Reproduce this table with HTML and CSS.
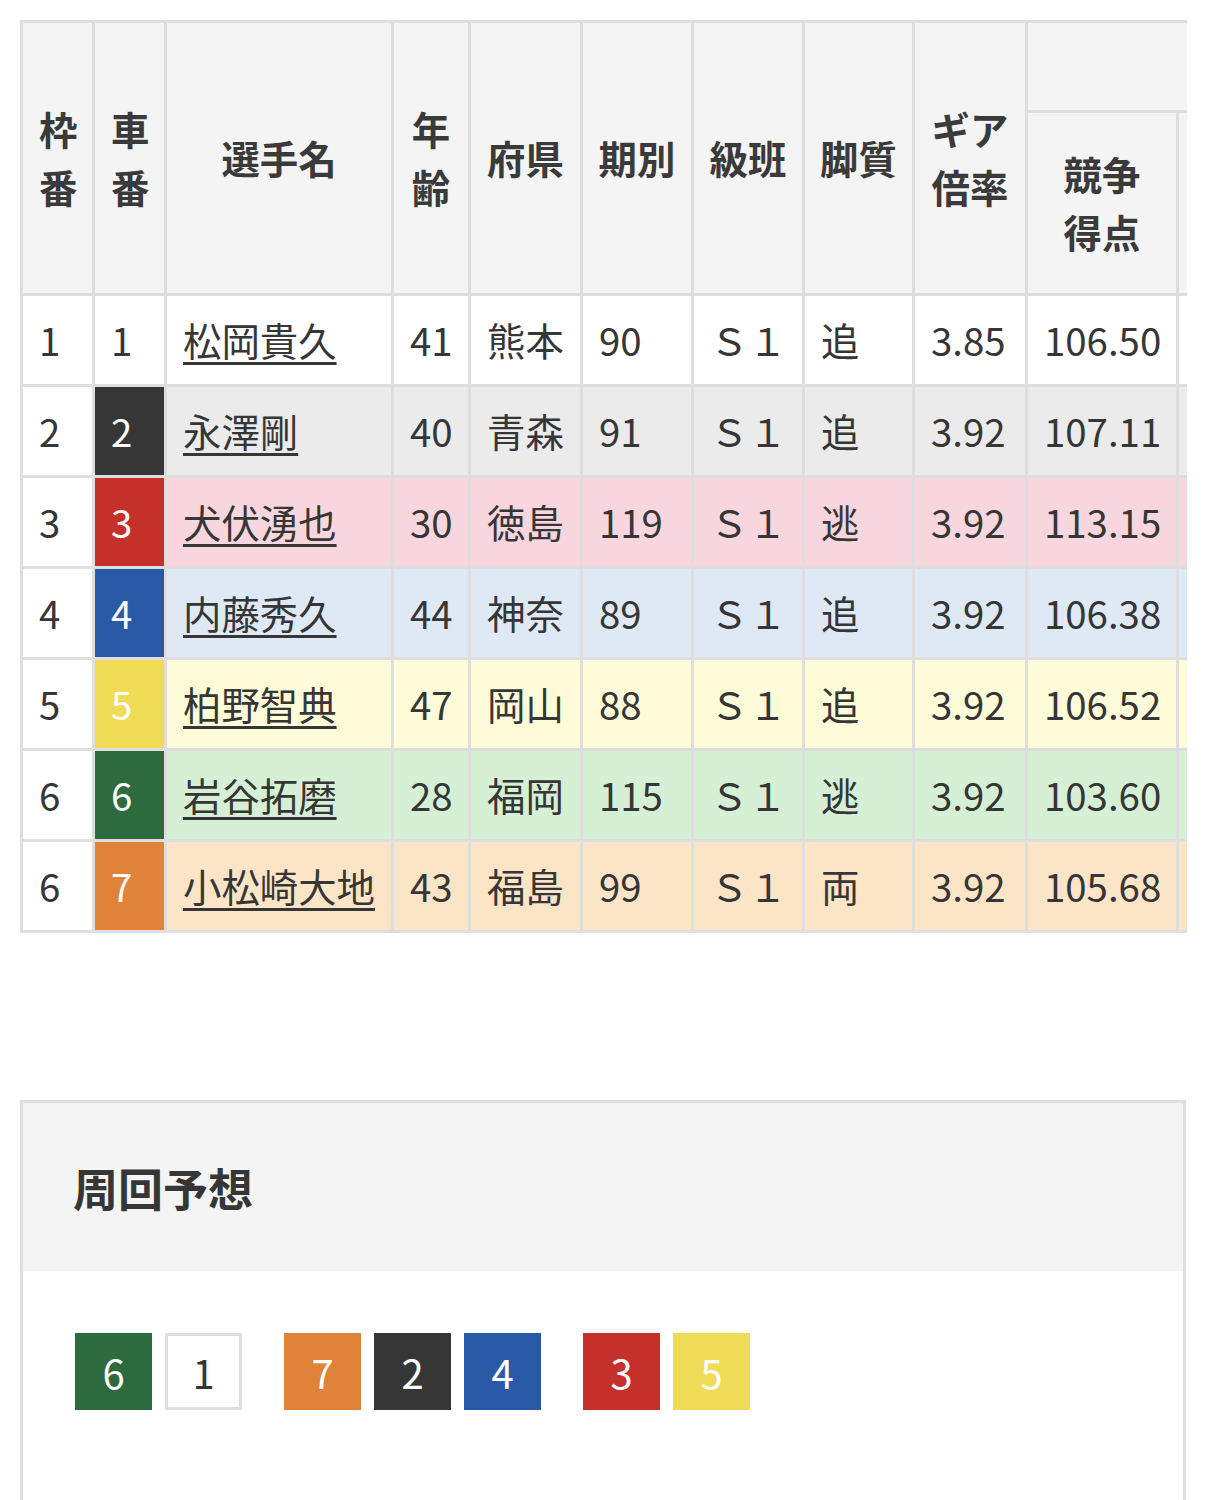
FILE: index.html
```html
<!DOCTYPE html>
<html lang="ja">
<head>
<meta charset="utf-8">
<title>出走表</title>
<link rel="stylesheet" href="styles.css">
</head>
<body>
<div class="scroll">
  <table class="entry">
    <colgroup>
      <col class="c-waku"><col class="c-sha"><col class="c-name"><col class="c-age"><col class="c-pref">
      <col class="c-ki"><col class="c-kyu"><col class="c-kyaku"><col class="c-gear"><col class="c-score">
      <col class="c-ex">
    </colgroup>
    <thead>
      <tr>
        <th rowspan="2" class="narrow">枠番</th>
        <th rowspan="2" class="narrow">車番</th>
        <th rowspan="2">選手名</th>
        <th rowspan="2" class="narrow">年齢</th>
        <th rowspan="2">府県</th>
        <th rowspan="2">期別</th>
        <th rowspan="2">級班</th>
        <th rowspan="2">脚質</th>
        <th rowspan="2">ギア<br>倍率</th>
        <th colspan="2" class="group"></th>
      </tr>
      <tr>
        <th class="sub">競争<br>得点</th>
        <th class="sub"></th>
      </tr>
    </thead>
    <tbody>
      <tr class="r1">
        <td class="waku">1</td><td class="sha s1">1</td><td><a href="#">松岡貴久</a></td><td>41</td><td>熊本</td><td>90</td><td>Ｓ１</td><td>追</td><td>3.85</td><td>106.50</td><td></td>
      </tr>
      <tr class="r2">
        <td class="waku">2</td><td class="sha s2">2</td><td><a href="#">永澤剛</a></td><td>40</td><td>青森</td><td>91</td><td>Ｓ１</td><td>追</td><td>3.92</td><td>107.11</td><td></td>
      </tr>
      <tr class="r3">
        <td class="waku">3</td><td class="sha s3">3</td><td><a href="#">犬伏湧也</a></td><td>30</td><td>徳島</td><td>119</td><td>Ｓ１</td><td>逃</td><td>3.92</td><td>113.15</td><td></td>
      </tr>
      <tr class="r4">
        <td class="waku">4</td><td class="sha s4">4</td><td><a href="#">内藤秀久</a></td><td>44</td><td>神奈</td><td>89</td><td>Ｓ１</td><td>追</td><td>3.92</td><td>106.38</td><td></td>
      </tr>
      <tr class="r5">
        <td class="waku">5</td><td class="sha s5">5</td><td><a href="#">柏野智典</a></td><td>47</td><td>岡山</td><td>88</td><td>Ｓ１</td><td>追</td><td>3.92</td><td>106.52</td><td></td>
      </tr>
      <tr class="r6">
        <td class="waku">6</td><td class="sha s6">6</td><td><a href="#">岩谷拓磨</a></td><td>28</td><td>福岡</td><td>115</td><td>Ｓ１</td><td>逃</td><td>3.92</td><td>103.60</td><td></td>
      </tr>
      <tr class="r7">
        <td class="waku">6</td><td class="sha s7">7</td><td><a href="#">小松崎大地</a></td><td>43</td><td>福島</td><td>99</td><td>Ｓ１</td><td>両</td><td>3.92</td><td>105.68</td><td></td>
      </tr>
    </tbody>
  </table>
</div>

<section class="lap">
  <h2 class="lap-title">周回予想</h2>
  <div class="lap-body">
    <div class="lines">
      <div class="line">
        <span class="car s6">6</span>
        <span class="car s1">1</span>
      </div>
      <div class="line">
        <span class="car s7">7</span>
        <span class="car s2">2</span>
        <span class="car s4">4</span>
      </div>
      <div class="line">
        <span class="car s3">3</span>
        <span class="car s5">5</span>
      </div>
    </div>
  </div>
</section>
</body>
</html>
```

FILE: styles.css
```css
html, body {
  margin: 0;
  padding: 0;
  background: #ffffff;
}

body {
  font-family: "Noto Sans CJK JP", "Noto Sans", sans-serif;
  color: #363636;
  padding-top: 20px;
}

.scroll {
  margin: 0 20px;
  width: 1167px;
  overflow: hidden;
}

.entry {
  table-layout: fixed;
  width: 1279px;
  border-collapse: separate;
  border-spacing: 0;
  border-top: 3px solid #dedede;
  border-left: 3px solid #dedede;
  font-size: 38.4px;
}

.c-waku { width: 72px; }
.c-sha { width: 72px; }
.c-name { width: 227px; }
.c-age { width: 77px; }
.c-pref { width: 112px; }
.c-ki { width: 111px; }
.c-kyu { width: 111px; }
.c-kyaku { width: 110px; }
.c-gear { width: 113px; }
.c-score { width: 151px; }
.c-ex { width: 120px; }

.entry th,
.entry td {
  box-sizing: border-box;
  border-right: 3px solid #dedede;
  border-bottom: 3px solid #dedede;
  overflow: hidden;
  white-space: nowrap;
}

.entry th {
  background: #f4f4f4;
  font-weight: 700;
  line-height: 1.5;
  text-align: center;
  vertical-align: middle;
  padding: 0 8px;
  color: #3a3a3a;
}

.entry th.narrow {
  white-space: normal;
  padding: 0 16px;
}

.entry th.group {
  height: 90px;
}

.entry th.sub {
  height: 183px;
}

.entry td {
  height: 91px;
  padding: 0 16px;
  vertical-align: middle;
  text-align: left;
  line-height: 1.3;
  font-weight: 400;
}

.entry td a {
  color: #363636;
  text-decoration: underline;
  text-decoration-thickness: 3px;
  text-underline-offset: 6px;
}

.r1 td { background: #ffffff; }
.r2 td { background: #ebebeb; }
.r3 td { background: #f8d6de; }
.r4 td { background: #dfe9f5; }
.r5 td { background: #fefbd8; }
.r6 td { background: #d6f0d6; }
.r7 td { background: #fce4c6; }

.entry td.waku { background: #ffffff; }

.s1 { background: #ffffff; color: #363636; }
.s2 { background: #363636; color: #ffffff; }
.s3 { background: #c5302a; color: #ffffff; }
.s4 { background: #2a5aa5; color: #ffffff; }
.s5 { background: #efdb55; color: #ffffff; }
.s6 { background: #2d6a3e; color: #ffffff; }
.s7 { background: #e08237; color: #ffffff; }

.r1 td.s1 { background: #ffffff; }
.r2 td.s2 { background: #363636; }
.r3 td.s3 { background: #c5302a; }
.r4 td.s4 { background: #2a5aa5; }
.r5 td.s5 { background: #efdb55; }
.r6 td.s6 { background: #2d6a3e; }
.r7 td.s7 { background: #e08237; }

.lap {
  margin: 167px 20px 0;
  border: 3px solid #dedede;
  border-bottom: none;
}

.lap-title {
  margin: 0;
  height: 168px;
  display: flex;
  align-items: center;
  padding: 0 50px;
  background: #f4f4f4;
  font-size: 45px;
  font-weight: 700;
  color: #363636;
}

.lap-body {
  padding: 62px 52px 200px;
}

.lines {
  display: flex;
  gap: 42px;
}

.line {
  display: flex;
  gap: 13px;
}

.car {
  box-sizing: border-box;
  width: 77px;
  height: 77px;
  display: flex;
  align-items: center;
  justify-content: center;
  font-size: 40px;
}

.car.s1 {
  border: 3px solid #dedede;
}
```
